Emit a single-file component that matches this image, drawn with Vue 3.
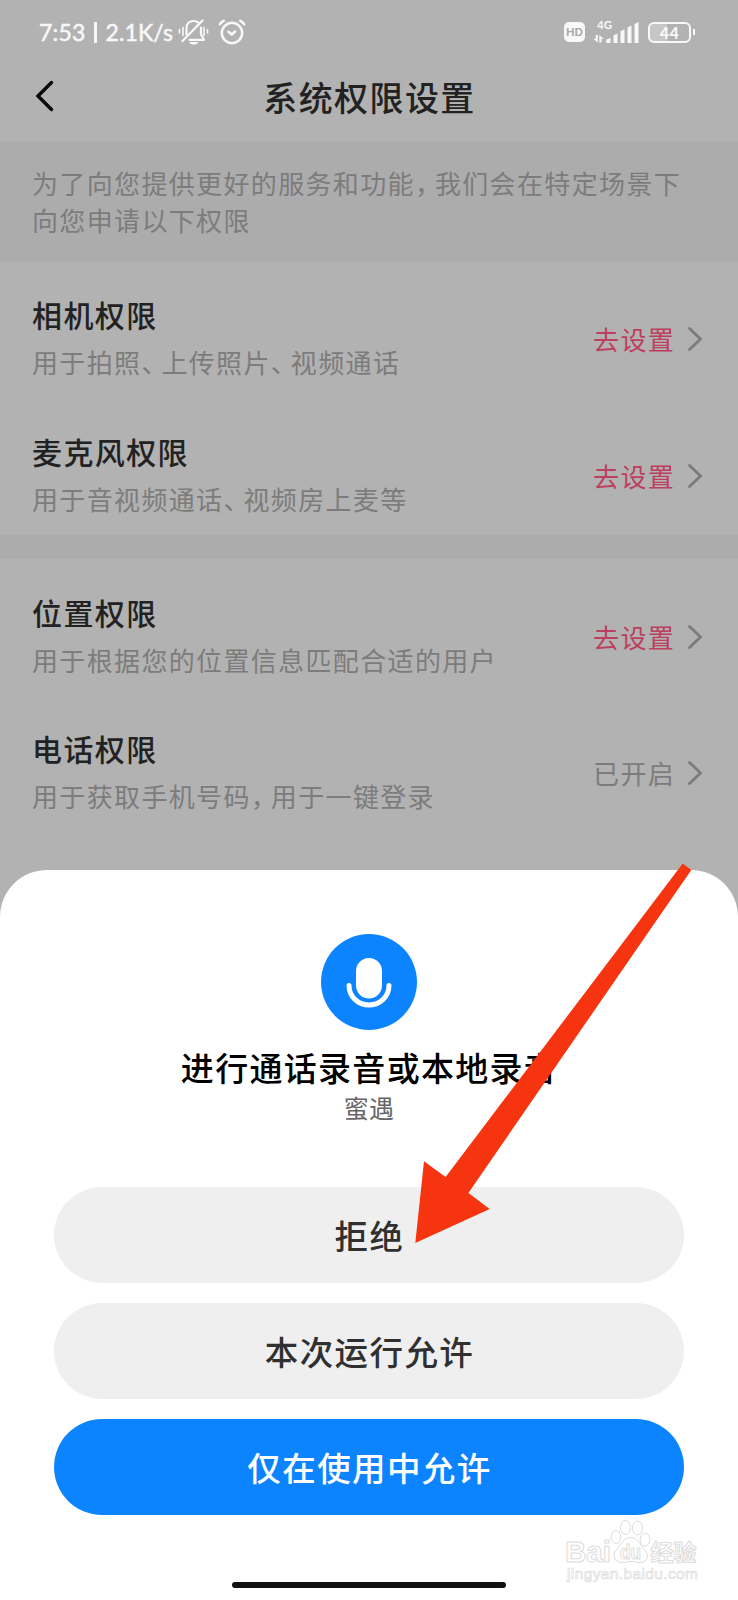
<template>
  <div class="phone">
    <div class="status">
      <span class="clock">7:53</span>
      <i class="sep"></i>
      <span class="speed">2.1K/s</span>
      <svg class="bell" width="31" height="27" viewBox="0 0 31 27">
        <g fill="none" stroke="#f8f8f8" stroke-width="2.200" stroke-linecap="round">
          <path d="M1.500 10.500v3.500M5 8.500v8M26 8.500v8M29.500 10.500v3.500" stroke-width="1.600" />
          <path d="M8.500 15.500V9.500C8.500 4.500 11.500 2 15.500 2C17.500 2 19 2.500 20.200 3.500" />
          <path d="M23 8.500V15.500L26 20.800H11.500" stroke-linejoin="round" />
          <path d="M24.500 1.500L4.500 22" stroke-width="2.300" />
        </g>
        <path d="M11 23h9.500c-1 2-3 2.600-4.700 2.600s-3.800-.6-4.800-2.600z" fill="#f8f8f8" />
      </svg>
      <svg class="alarm" width="28" height="26" viewBox="0 0 28 26">
        <g fill="none" stroke="#f8f8f8" stroke-width="2.500" stroke-linecap="round" stroke-linejoin="round">
          <circle cx="14" cy="14" r="10.200" />
          <path d="M1.800 5.200C2.800 3.700 4.200 2.500 5.800 1.800M26.200 5.200C25.200 3.700 23.800 2.500 22.200 1.800" />
          <path d="M10.500 12.800L13.800 15.500L17.200 12.500" />
        </g>
      </svg>

      <div class="status-right">
        <span class="hd">HD</span>
        <div class="signal">
          <span class="net">4G</span>
          <svg width="46" height="24" viewBox="0 0 46 24">
            <g fill="#f8f8f8">
              <path d="M2.700 15h2.100v7.600L.3 18.800h2.400zM6.300 22.500V15.200l4.700 3.600H8.500v3.700z" />
              <path d="M13.300 23v-3.400l4.200-1.700V23z" />
              <path d="M20.500 23v-7.500l4-2V23z" />
              <path d="M27.500 23V11.300l4-2V23z" />
              <path d="M34.500 23V7.500l4-2V23z" />
              <path d="M41.500 23V4l4-2v21z" />
            </g>
          </svg>
        </div>
        <div class="battery"><span>44</span></div>
      </div>
    </div>

    <div class="header">
      <svg class="back" width="20" height="32" viewBox="0 0 20 32">
        <path d="M16.500 2.500L3 16L16.500 29.500" fill="none" stroke="#080808" stroke-width="3.400" stroke-linecap="round" />
      </svg>
      <h1>系统权限设置</h1>
    </div>

    <p class="notice">
      为了向您提供更好的服务和功能<i class="punct">，</i>我们会在特定场景下<br />向您申请以下权限
    </p>

    <div class="group" v-for="(group, i) in groups" :key="i">
      <div class="row" v-for="item in group" :key="item.title">
        <div class="info">
          <h2>{{ item.title }}</h2>
          <p>
            <template v-for="(part, n) in split(item.desc)" :key="n">
              <i v-if="isPunct(part)" class="punct">{{ part }}</i>
              <template v-else>{{ part }}</template>
            </template>
          </p>
        </div>
        <span class="action" :class="{ done: item.enabled }">
          {{ item.enabled ? "已开启" : "去设置" }}
        </span>
        <svg class="chevron" width="18" height="28" viewBox="0 0 18 28">
          <path d="M3.500 3.500L14.500 14L3.500 24.500" fill="none" stroke="#7b7b7b" stroke-width="2.800" stroke-linecap="round" />
        </svg>
      </div>
    </div>

    <div class="sheet">
      <svg class="mic" width="96" height="96" viewBox="0 0 96 96">
        <circle cx="48" cy="48" r="48" fill="#0d84ff" />
        <rect x="35" y="24" width="26" height="40.500" rx="13" fill="#fff" />
        <path d="M28 51.500C28 62.500 37 71 48 71S68 62.500 68 51.500" fill="none" stroke="#fff" stroke-width="5" stroke-linecap="round" />
      </svg>
      <h3>进行通话录音或本地录音</h3>
      <p class="app-name">蜜遇</p>
      <button
        v-for="choice in choices"
        :key="choice.label"
        :class="{ primary: choice.primary }"
      >
        {{ choice.label }}
      </button>
      <div class="home-bar"></div>
    </div>

    <svg class="arrow" width="277" height="380" viewBox="0 0 277 380">
      <path d="M267.700 0.500L276.300 7L53.400 330L74.700 346L0.300 380L9 298.300L30.600 314Z" fill="#f6340f" />
    </svg>

    <svg class="watermark" width="140" height="70" viewBox="0 0 140 70">
      <g fill="#fff" stroke="#dcdcdc" stroke-width="1">
        <text x="3" y="46" font-size="30" font-weight="bold" textLength="46" lengthAdjust="spacingAndGlyphs">Bai</text>
        <ellipse cx="54" cy="21" rx="4.800" ry="6.500" />
        <ellipse cx="63.500" cy="11.500" rx="5" ry="7" />
        <ellipse cx="75.500" cy="12" rx="5" ry="7" />
        <ellipse cx="83" cy="23.500" rx="4.800" ry="6.500" />
        <path d="M68.500 21.500C61 21.500 59 29 54.500 33.500C49.500 39 52.500 46.500 60 46.500C64 46.500 66 45.500 69 45.500S74 46.500 78 46.500C86 46.500 87.500 39 82.500 33.500C78 29 76.500 21.500 68.500 21.500Z" />
        <text x="58" y="43" font-size="20" font-weight="bold" textLength="21" lengthAdjust="spacingAndGlyphs">du</text>
        <text class="cjk" x="88.500" y="44.500" font-size="23" font-weight="bold" textLength="46">经验</text>
        <text x="5" y="63" font-size="15.500" stroke-width=".7" textLength="131">jingyan.baidu.com</text>
      </g>
    </svg>
  </div>
</template>

<script setup>
const groups = [
  [
    { title: "相机权限", desc: "用于拍照、上传照片、视频通话" },
    { title: "麦克风权限", desc: "用于音视频通话、视频房上麦等" },
  ],
  [
    { title: "位置权限", desc: "用于根据您的位置信息匹配合适的用户" },
    { title: "电话权限", desc: "用于获取手机号码，用于一键登录", enabled: true },
  ],
];

const choices = [
  { label: "拒绝" },
  { label: "本次运行允许" },
  { label: "仅在使用中允许", primary: true },
];

// punctuation takes less room than a full character
const split = (text) => text.split(/([、，])/);
const isPunct = (part) => part === "、" || part === "，";
</script>

<style>
body {
  margin: 0;
}
</style>

<style scoped>
.phone {
  position: relative;
  width: 738px;
  height: 1600px;
  overflow: hidden;
  background: #b2b2b2;
  color: #222;
  font-family: "Noto Sans CJK SC", "Liberation Sans", sans-serif;
}

h1,
h2,
h3,
p {
  margin: 0;
  font-weight: 500;
}

.status {
  display: flex;
  align-items: center;
  height: 64px;
  padding: 0 43px 0 39px;
  color: #f8f8f8;
  font-family: Lato, sans-serif;
  font-size: 23px;
  font-weight: 400;
  -webkit-text-stroke: 0.5px #f8f8f8;
}

.clock {
  width: 55px;
  letter-spacing: 0.2px;
  white-space: nowrap;
}

.sep {
  width: 2.5px;
  height: 21px;
  background: #f8f8f8;
}

.speed {
  width: 72px;
  margin-left: 9px;
  letter-spacing: 0.1px;
  white-space: nowrap;
}

.alarm {
  margin-left: 9px;
}

.status-right {
  display: flex;
  align-items: center;
  margin-left: auto;
  -webkit-text-stroke: 0;
}

.hd {
  width: 21px;
  height: 20px;
  line-height: 20px;
  border-radius: 5px;
  background: #f8f8f8;
  color: #a8a8a8;
  font-size: 11px;
  font-weight: 900;
  text-align: center;
}

.signal {
  position: relative;
  height: 24px;
  margin-left: 8px;
}

.net {
  position: absolute;
  left: 4px;
  top: -2px;
  font-size: 11.5px;
  line-height: 13px;
  font-weight: 700;
}

.battery {
  position: relative;
  box-sizing: border-box;
  width: 43px;
  height: 21px;
  margin: 0 4px 0 9px;
  border: 2.5px solid #f8f8f8;
  border-radius: 6px;
  background: linear-gradient(90deg, #c6c6c6 44%, #b2b2b2 44%);
  font-size: 16px;
  line-height: 17px;
  font-weight: 900;
  letter-spacing: 0.5px;
  text-align: center;
}

.battery::after {
  content: "";
  position: absolute;
  right: -6px;
  top: 5px;
  width: 2.5px;
  height: 6px;
  background: #f8f8f8;
}

.header {
  display: flex;
  align-items: center;
  height: 77px;
  padding-left: 35px;
}

.back {
  margin-bottom: 13px;
}

.header h1 {
  flex: 1;
  margin: 0 54px 12px 0;
  font-size: 34px;
  line-height: 64px;
  letter-spacing: 1.4px;
  text-align: center;
}

.notice {
  box-sizing: border-box;
  height: 121px;
  padding: 24px 32px 0;
  background: #acacac;
  color: #7c7c7c;
  font-size: 26px;
  font-weight: 400;
  line-height: 36.5px;
  letter-spacing: 1.35px;
  white-space: nowrap;
}

/* half-width form of the glyph, plus some room after it */
.punct {
  font-style: normal;
  font-feature-settings: "halt";
  letter-spacing: 7px;
}

.group + .group {
  border-top: 24px solid #acacac;
}

.row {
  display: flex;
  align-items: center;
  box-sizing: border-box;
  height: 136.7px;
  padding: 19px 34px 0 32px;
}

.info {
  flex: 1;
  margin-top: -4px;
}

.info h2 {
  font-size: 30px;
  line-height: 48px;
  letter-spacing: 1.4px;
}

.info p {
  color: #7c7c7c;
  font-size: 26px;
  font-weight: 400;
  line-height: 47px;
  letter-spacing: 1.35px;
}

.action {
  margin-bottom: 1px;
  color: #bd3f60;
  font-size: 26px;
  line-height: 40px;
  letter-spacing: 1.3px;
}

.action.done {
  color: #7c7c7c;
}

.chevron {
  margin: 0 0 1px 11px;
}

.sheet {
  position: absolute;
  left: 0;
  top: 870px;
  display: flex;
  flex-direction: column;
  align-items: center;
  box-sizing: border-box;
  width: 738px;
  height: 730px;
  padding-top: 64px;
  border-radius: 47px 47px 0 0;
  background: #fff;
}

.sheet h3 {
  margin-top: 14px;
  color: #000;
  font-size: 33px;
  line-height: 46px;
  letter-spacing: 1.3px;
  text-indent: 1px;
}

.app-name {
  margin-bottom: 63px;
  color: #666;
  font-size: 25px;
  font-weight: 400;
  line-height: 34px;
  letter-spacing: 0.3px;
}

.sheet button {
  width: 630px;
  height: 96px;
  margin: 0 0 20px;
  padding: 0 0 2px 1px;
  border: 0;
  border-radius: 48px;
  background: #efefef;
  color: #303030;
  font-family: inherit;
  font-size: 33.5px;
  font-weight: 500;
  letter-spacing: 1.4px;
}

.sheet button.primary {
  background: #0d84ff;
  color: #fff;
}

.home-bar {
  width: 274px;
  height: 6px;
  margin-top: 47px;
  border-radius: 3px;
  background: #111;
}

.arrow {
  position: absolute;
  left: 415px;
  top: 863px;
}

.watermark {
  position: absolute;
  left: 562px;
  top: 1516px;
  font-family: "Liberation Sans", sans-serif;
}

.watermark .cjk {
  font-family: "Noto Sans CJK SC", sans-serif;
}
</style>
